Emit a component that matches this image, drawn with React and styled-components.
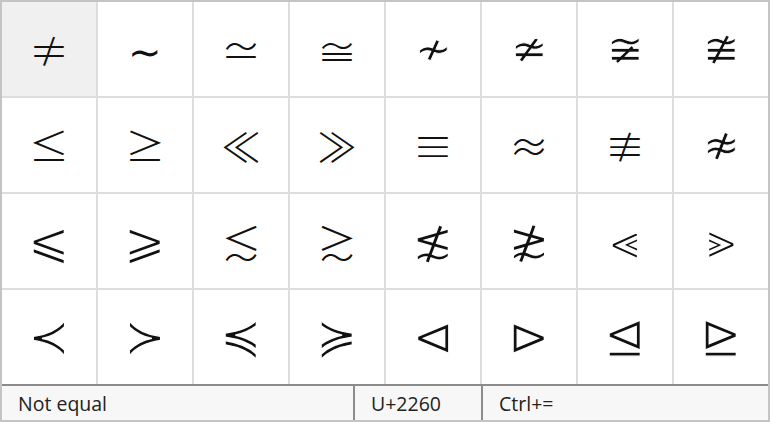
import React from 'react';
import styled, { createGlobalStyle } from 'styled-components';

const GlobalStyle = createGlobalStyle`
  html, body {
    margin: 0;
    padding: 0;
    background: #ffffff;
  }
`;

const Frame = styled.div`
  width: 770px;
  height: 422px;
  box-sizing: border-box;
  border: 2px solid #c4c4c4;
  display: flex;
  flex-direction: column;
  background: #dddddd;
`;

const Grid = styled.div`
  display: grid;
  grid-template-columns: repeat(8, 94px);
  grid-auto-rows: 94px;
  gap: 2px;
`;

const Cell = styled.div`
  display: flex;
  align-items: center;
  justify-content: center;
  background: ${(p) => (p.selected ? '#f0f0f0' : '#ffffff')};
  color: #111111;
  line-height: 1;
`;

const looks = {
  cjk: `font-family: 'Noto Sans CJK JP', serif; font-size: 40px; font-weight: 300;`,
  mid: `font-family: 'DejaVu Sans', serif; font-size: 44px; font-weight: 400;
    -webkit-text-stroke: 0.8px #ffffff; will-change: transform;`,
  big: `font-family: 'DejaVu Sans', serif; font-size: 50px; font-weight: 400;
    -webkit-text-stroke: 1.3px #ffffff; will-change: transform;`,
};

const Glyph = styled.span`
  ${(p) => looks[p.look]}
`;

const StatusBar = styled.div`
  flex: 1;
  display: flex;
  border-top: 2px solid #8c8c8c;
  background: #f7f7f7;
  font-family: 'Open Sans', sans-serif;
  font-size: 19.5px;
  color: #222222;
`;

const StatusField = styled.div`
  width: ${(p) => p.width};
  flex: ${(p) => (p.grow ? 1 : 'none')};
  box-sizing: border-box;
  display: flex;
  align-items: center;
  padding-left: 16px;
  border-left: ${(p) => (p.first ? 'none' : '2px solid #8c8c8c')};
`;

const cjkSet = '≠∼≃≅≤≥≪≫≡≈≢≲≳';
const midSet = '≁≄≆≇≉';

const symbols = [
  '≠', '∼', '≃', '≅', '≁', '≄', '≆', '≇',
  '≤', '≥', '≪', '≫', '≡', '≈', '≢', '≉',
  '⩽', '⩾', '≲', '≳', '≴', '≵', '⪡', '⪢',
  '≺', '≻', '≼', '≽', '⊲', '⊳', '⊴', '⊵',
];

const lookOf = (s) => (cjkSet.includes(s) ? 'cjk' : midSet.includes(s) ? 'mid' : 'big');

const App = () => {
  return (
    <>
      <GlobalStyle />
      <Frame>
        <Grid>
          {symbols.map((s, i) => (
            <Cell key={i} selected={i === 0}>
              <Glyph look={lookOf(s)}>{s}</Glyph>
            </Cell>
          ))}
        </Grid>
        <StatusBar>
          <StatusField first width="351px">Not equal</StatusField>
          <StatusField width="128px">U+2260</StatusField>
          <StatusField grow>Ctrl+=</StatusField>
        </StatusBar>
      </Frame>
    </>
  );
};

export default App;
